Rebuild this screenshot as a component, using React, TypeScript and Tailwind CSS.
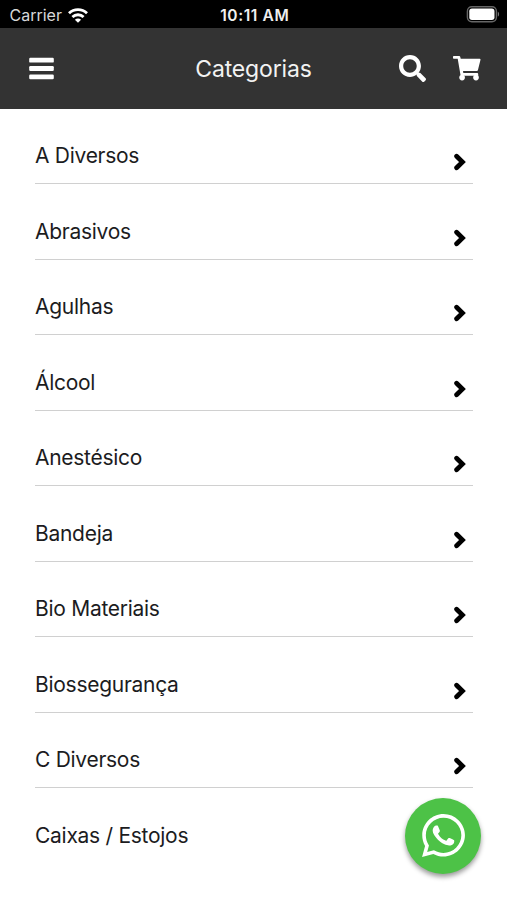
import { FaSearch, FaWhatsapp } from 'react-icons/fa';

const CATEGORIES = [
  'A Diversos',
  'Abrasivos',
  'Agulhas',
  'Álcool',
  'Anestésico',
  'Bandeja',
  'Bio Materiais',
  'Biossegurança',
  'C Diversos',
  'Caixas / Estojos',
];

function WifiIcon() {
  return (
    <svg viewBox="0 0 20 15" className="h-[15px] w-5" fill="none" stroke="currentColor" strokeWidth="2.8">
      <path d="M1 5.2C6 .3 14 .3 19 5.2" />
      <path d="M4.4 9C7.5 6 12.5 6 15.6 9" />
      <path d="M10 14.8 6.9 11.7C8.7 10 11.3 10 13.1 11.7Z" fill="currentColor" stroke="none" />
    </svg>
  );
}

function BatteryIcon() {
  return (
    <svg viewBox="0 0 34 18" className="h-[18px] w-[34px]">
      <rect x="1.4" y="1.8" width="29" height="14.9" rx="4.4" fill="none" stroke="#666" strokeWidth="1.4" />
      <rect x="3.3" y="3.6" width="25.2" height="11.3" rx="2.7" fill="#fff" />
      <path d="M31.8 6.8C33.5 7.3 33.5 11.1 31.8 11.6Z" fill="#777" />
    </svg>
  );
}

function MenuIcon() {
  return (
    <svg viewBox="0 0 25 23" className="h-[23px] w-[25px]" fill="currentColor">
      <rect x="0.2" y="0.8" width="24.6" height="4.8" rx="1.2" />
      <rect x="0.2" y="9.1" width="24.6" height="4.8" rx="1.2" />
      <rect x="0.2" y="17.5" width="24.6" height="4.8" rx="1.2" />
    </svg>
  );
}

function CartIcon() {
  return (
    <svg viewBox="0 0 28 26" className="h-[26px] w-7" fill="currentColor">
      <path d="M.8 1H6.2Q7 1 7.2 1.8L7.7 3.7H26.6Q27.7 3.7 27.5 4.8L24.9 15.2Q24.7 16 23.8 16H10L10.3 17.9H24.2Q25.2 17.9 25.2 18.9V20.8H8.5Q7.7 20.8 7.5 20L4.7 3.8H.8Q0 3.8 0 3V1.8Q0 1 .8 1Z" />
      <circle cx="9.1" cy="22.6" r="2.8" />
      <circle cx="23" cy="22.6" r="2.8" />
    </svg>
  );
}

function ChevronIcon() {
  return (
    <svg
      viewBox="0 0 12 18"
      className="h-[18px] w-3"
      fill="none"
      stroke="currentColor"
      strokeWidth="4.7"
      strokeLinecap="round"
    >
      <path d="M2.6 3.2 8.5 9 2.6 14.8" />
    </svg>
  );
}

function StatusBar() {
  return (
    <div className="grid h-7 grid-cols-3 items-center bg-black pr-[7px] pl-[9.5px] text-white">
      <div className="flex items-center gap-1.5 pt-0.5 text-[#d8d8d8]">
        <span className="text-[16px] leading-5">Carrier</span>
        <span className="text-white">
          <WifiIcon />
        </span>
      </div>
      <span className="pt-[3px] text-center text-[15.5px] leading-5 font-semibold tracking-[0.6px] text-[#f0f0f0]">
        10:11 AM
      </span>
      <div className="flex justify-end">
        <BatteryIcon />
      </div>
    </div>
  );
}

function Header() {
  return (
    <header className="grid h-[80.5px] grid-cols-[1fr_auto_1fr] items-center bg-[#333] pr-[26px] pl-[29px] text-white">
      <button aria-label="Menu" className="w-fit">
        <MenuIcon />
      </button>
      <h1 className="pt-0.5 pr-[3px] text-[23px] leading-8 tracking-[-0.15px] text-[#f2f2f2]">Categorias</h1>
      <div className="flex items-center justify-end gap-[27px]">
        <button aria-label="Buscar">
          <FaSearch className="size-[27px]" />
        </button>
        <button aria-label="Carrinho">
          <CartIcon />
        </button>
      </div>
    </header>
  );
}

export default function App() {
  return (
    <div className="relative h-[900px] w-[507px] overflow-hidden bg-white font-['Inter',sans-serif]">
      <StatusBar />
      <Header />
      <ul className="pr-[34px] pl-[35px]">
        {CATEGORIES.map((name) => (
          <li
            key={name}
            className="flex h-[75.5px] items-end justify-between border-b border-[#d0d0d0] pr-[7px] pb-3 text-[#1c1c1e] last:border-transparent"
          >
            <span className="text-[21px] leading-[30px] tracking-[-0.28px]">{name}</span>
            <span className="text-black">
              <ChevronIcon />
            </span>
          </li>
        ))}
      </ul>

      {/* Floating WhatsApp contact button */}
      <button
        aria-label="WhatsApp"
        className="absolute right-[26px] bottom-[26.5px] flex size-[76px] items-center justify-center rounded-full bg-[#4dc247] text-white shadow-[0_3px_5px_rgba(0,0,0,0.4)]"
      >
        <FaWhatsapp className="size-[49px]" />
      </button>
    </div>
  );
}
